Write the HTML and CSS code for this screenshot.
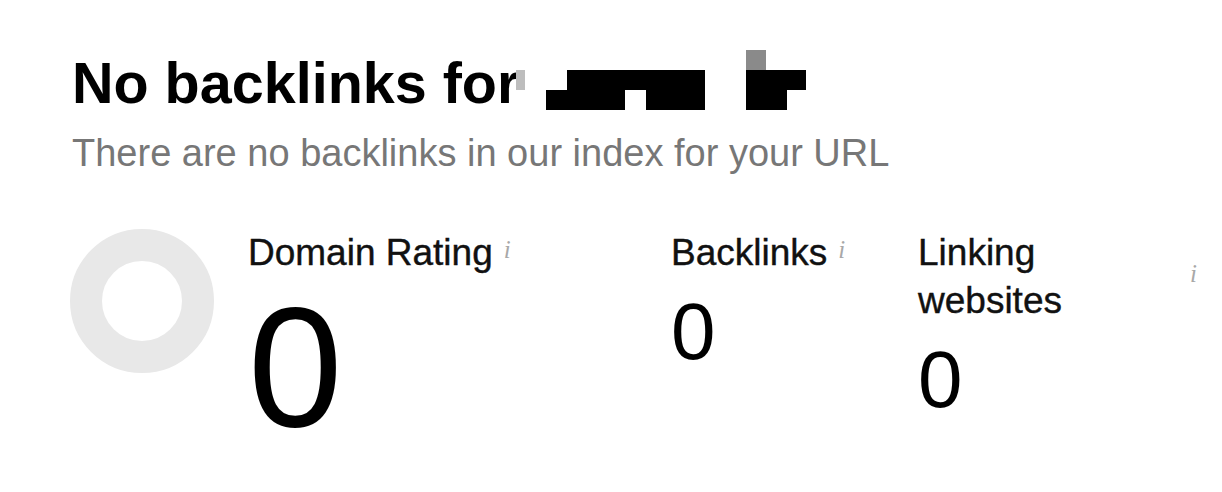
FILE: index.html
```html
<!DOCTYPE html>
<html lang="en">
<head>
<meta charset="utf-8">
<title>No backlinks</title>
<link rel="stylesheet" href="styles.css">
</head>
<body>
<main class="panel">
  <h1 class="title">No backlinks for<svg class="redacted" width="290" height="60" viewBox="0 0 290 60" aria-hidden="true"><rect x="0" y="20" width="9" height="20" fill="#bdbdbd"/><rect x="51" y="20" width="138" height="20" fill="#000"/><rect x="30" y="40" width="79" height="20" fill="#000"/><rect x="130" y="40" width="59" height="20" fill="#000"/><rect x="230" y="0" width="20" height="20" fill="#8a8a8a"/><rect x="230" y="20" width="60" height="20" fill="#000"/><rect x="230" y="40" width="41" height="20" fill="#000"/></svg></h1>
  <p class="subtitle">There are no backlinks in our index for your URL</p>
  <section class="stats">
    <div class="donut"></div>
    <div class="metric">
      <div class="metric-head"><span class="metric-label">Domain Rating</span><span class="info">i</span></div>
      <div class="value value-big">0</div>
    </div>
    <div class="metric">
      <div class="metric-head"><span class="metric-label">Backlinks</span><span class="info">i</span></div>
      <div class="value">0</div>
    </div>
    <div class="metric">
      <div class="metric-head"><span class="metric-label">Linking websites</span><span class="info">i</span></div>
      <div class="value">0</div>
    </div>
  </section>
</main>
</body>
</html>
```
FILE: styles.css
```css
html, body {
  margin: 0;
  padding: 0;
  background: #ffffff;
}

.panel {
  padding: 49px 0 0 71px;
  font-family: "Liberation Sans", Arial, sans-serif;
  color: #000;
}

.title {
  margin: 0 0 0 1px;
  font-size: 57.5px;
  line-height: 68px;
  font-weight: 700;
  color: #000;
  white-space: nowrap;
}

.redacted {
  display: inline-block;
  vertical-align: -7px;
  margin-left: -3px;
}

.subtitle {
  margin: 14px 0 0 1px;
  font-size: 38px;
  line-height: 44px;
  color: #777777;
}

.stats {
  display: grid;
  grid-template-columns: 144px 389px 213px 282px;
  column-gap: 34px;
  align-items: start;
  margin-top: 54px;
  margin-left: -1px;
}

.donut {
  width: 144px;
  height: 144px;
  box-sizing: border-box;
  border: 32px solid #e8e8e8;
  border-radius: 50%;
}

.metric {
  display: flex;
  flex-direction: column;
}

.metric-head {
  display: flex;
  align-items: center;
  gap: 11px;
}

.metric-label {
  font-size: 37px;
  line-height: 48px;
  color: #111;
  -webkit-text-stroke: 0.4px #111;
}

.info {
  flex: none;
  width: 10px;
  margin-bottom: 8px;
  font-family: "Liberation Serif", "Times New Roman", serif;
  font-style: italic;
  font-size: 25px;
  line-height: 1;
  color: #a8a8a8;
}

.value {
  margin-top: 15px;
  font-size: 80px;
  line-height: 1;
  color: #000;
}

.value-big {
  margin-top: 5px;
  font-size: 170px;
}
```
